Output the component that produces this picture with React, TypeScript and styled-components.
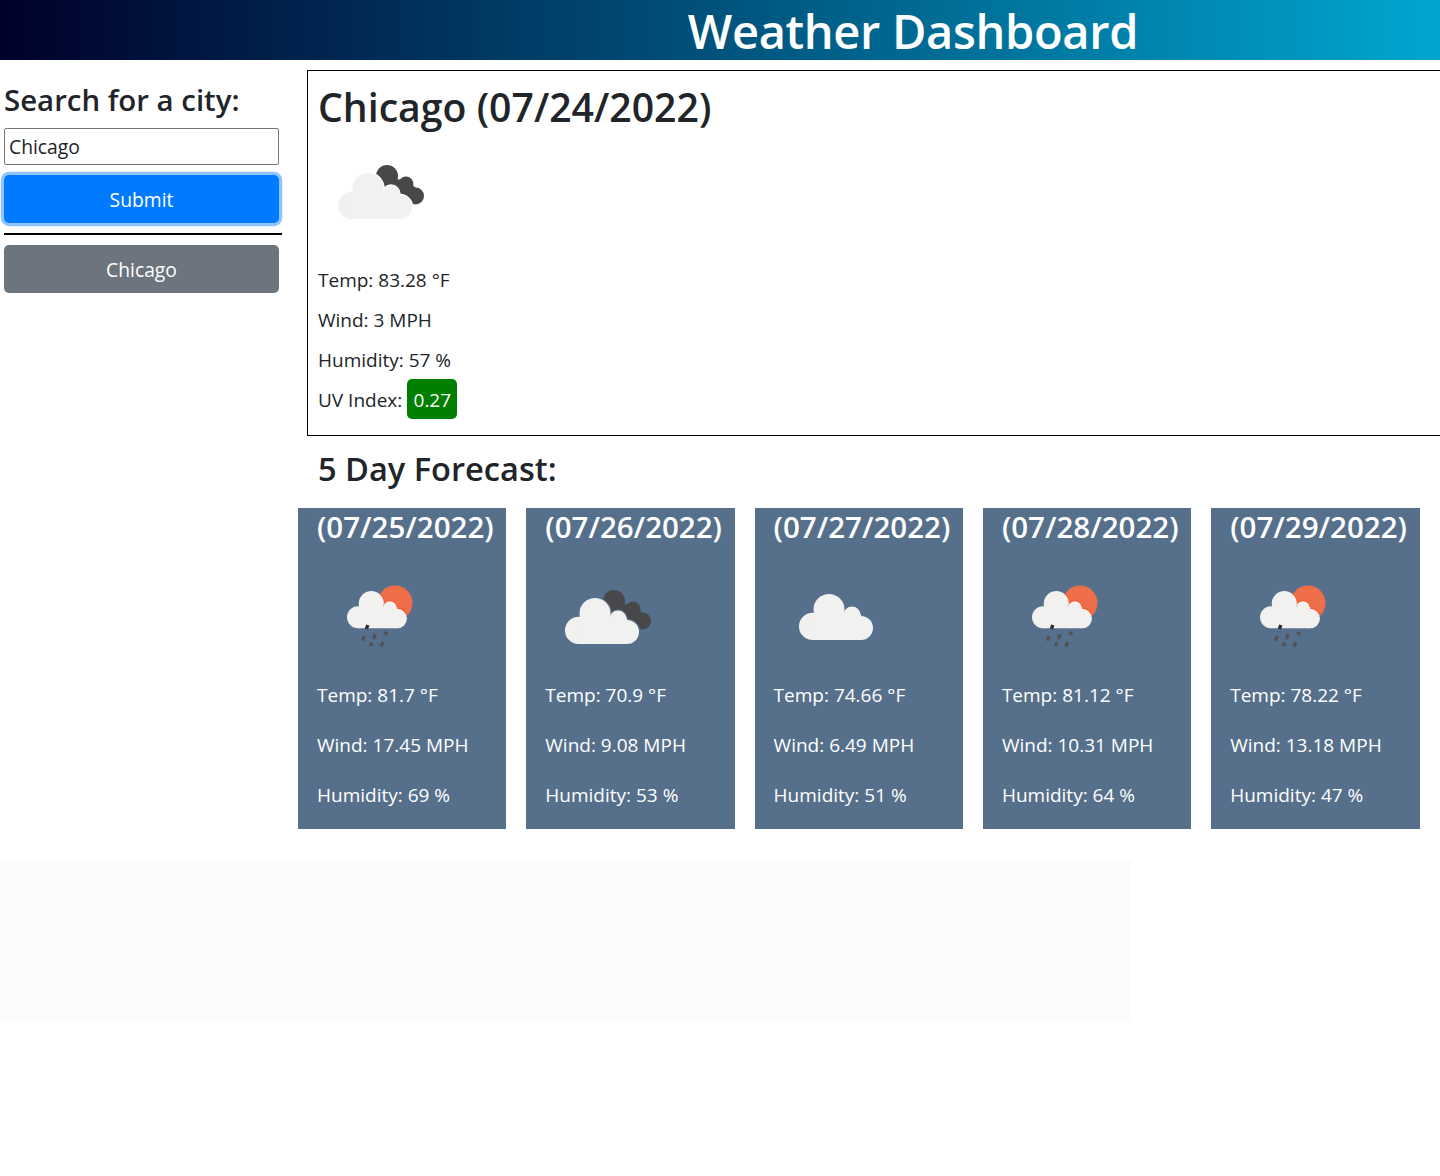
import { createGlobalStyle } from 'styled-components';
import styled from 'styled-components';

const GlobalStyle = createGlobalStyle`
    * {
        box-sizing: border-box;
    }
    html, body {
        margin: 0;
        background: #fff;
        overflow-x: hidden;
    }
    body {
        min-height: 1176px;
        font-family: "Open Sans", "Noto Sans", sans-serif;
        color: #212529;
    }
`

const Header = styled.header`
    height: 60px;
    display: flex;
    align-items: center;
    justify-content: center;
    padding: 3px 0 0 386px;
    background: linear-gradient(90deg, #00002a 0%, #00a6cf 100%);
`
const HeaderTitle = styled.h1`
    margin: 0;
    color: #fff;
    font-size: 47px;
    font-weight: 600;
    letter-spacing: -0.33px;
    line-height: 57px;
`
const Layout = styled.div`
    display: grid;
    grid-template-columns: 298px 1142px;
`
const Sidebar = styled.aside`
    padding: 21px 0 0 4px;
    display: flex;
    flex-direction: column;
    align-items: flex-start;
`
const SearchTitle = styled.h4`
    margin: 0 0 8px;
    font-size: 29.4px;
    font-weight: 600;
    line-height: 39px;
    white-space: nowrap;
`
const CityInput = styled.input`
    width: 275px;
    height: 37px;
    padding: 0 4px;
    border: 1px solid #767676;
    border-radius: 2px;
    font: 19.3px "Open Sans", sans-serif;
    color: #212529;
    background: #fff;
`
const Button = styled.button<{ $variant: 'primary' | 'secondary' }>`
    width: 275px;
    height: 48px;
    padding: 1px 0 0;
    border: 0;
    border-radius: 5px;
    color: #fff;
    font: 19.3px "Open Sans", sans-serif;
    background: ${p => (p.$variant === 'primary' ? '#007bff' : '#6c757d')};
    box-shadow: ${p => (p.$variant === 'primary' ? '0 0 0 3.2px #8fc4ff' : 'none')};
    margin-top: ${p => (p.$variant === 'primary' ? '10px' : '0')};
`
const Divider = styled.hr`
    width: 278px;
    height: 2px;
    margin: 10px 0;
    border: 0;
    background: #000;
`
const Main = styled.main`
    min-width: 0;
`
const CurrentBox = styled.section`
    width: 1140px;
    height: 366px;
    margin: 10px 0 0 9px;
    padding: 9px 10px 0;
    border: 1px solid #000;
`
const CityTitle = styled.h2`
    margin: 0;
    font-size: 39.2px;
    font-weight: 600;
    line-height: 54px;
    white-space: nowrap;
`
const BigIcon = styled.svg`
    display: block;
    width: 100px;
    height: 100px;
    margin: 11px 0 14px;
    overflow: visible;
`
const StatRow = styled.p`
    margin: 0;
    height: 40px;
    padding-top: 2px;
    display: flex;
    align-items: center;
    gap: 5px;
    font-size: 19px;
`
const UvBadge = styled.span`
    height: 40px;
    width: 50px;
    margin-top: -2px;
    padding-top: 2px;
    display: flex;
    align-items: center;
    justify-content: center;
    background: #008000;
    color: #fff;
    border-radius: 5px;
`
const ForecastTitle = styled.h3`
    margin: 14px 0 20px 20px;
    font-size: 32.6px;
    font-weight: 600;
    line-height: 38px;
`
const Cards = styled.div`
    width: 1121.5px;
    display: grid;
    grid-template-columns: repeat(5, minmax(0, 1fr));
    gap: 20px;
`
const Card = styled.article`
    height: 321px;
    padding: 0 19px;
    background: #56708b;
    color: #fff;
`
const CardDate = styled.h3`
    margin: 0;
    padding-top: 1px;
    height: 62px;
    font-size: 29.5px;
    font-weight: 600;
    line-height: 36px;
    white-space: nowrap;
`
const CardIcon = styled.svg`
    display: block;
    width: 100px;
    height: 100px;
    margin-bottom: 13px;
    overflow: visible;
`
const CardStat = styled.p`
    margin: 0 0 26px;
    font-size: 19px;
    line-height: 24px;
    white-space: nowrap;
`
const EmptyPanel = styled.div`
    width: 1131px;
    height: 161px;
    margin-top: 31px;
    background: #fafbfd;
`

type Kind = 'clouds' | 'broken' | 'rain';

// light cloud, drawn from circles over a base block, 74 x 46 units
function CloudShape({ x, y, scale, fill }: { x: number; y: number; scale: number; fill: string }) {
    return (
        <g transform={`translate(${x} ${y}) scale(${scale})`} fill={fill}>
            <circle cx="13.6" cy="32.4" r="13.6" />
            <circle cx="30" cy="15.5" r="15.5" />
            <circle cx="53" cy="21" r="8.5" />
            <circle cx="62" cy="34" r="12" />
            <rect x="13.6" y="20" width="48.4" height="26" />
        </g>
    );
}

// the thin line where a cloud overlaps what is behind it
function CloudGap({ x, y, scale, color }: { x: number; y: number; scale: number; color: string }) {
    return (
        <g transform={`translate(${x} ${y}) scale(${scale})`} fill={color} stroke={color} strokeWidth="2.4">
            <circle cx="30" cy="15.5" r="15.5" />
            <circle cx="53" cy="21" r="8.5" />
            <circle cx="62" cy="34" r="12" />
        </g>
    );
}

function WeatherIcon({ kind, gap }: { kind: Kind; gap: string }) {
    if (kind === 'clouds') {
        return <CloudShape x={25} y={24} scale={1} fill="#f1f1f0" />;
    }
    if (kind === 'broken') {
        return (
            <>
                <g fill="#48484a">
                    <circle cx="69" cy="31" r="11" />
                    <circle cx="88" cy="39" r="7.5" />
                    <circle cx="97.5" cy="51" r="8.5" />
                    <polygon points="66,33 88,35 103,47 96,59 80,62" />
                </g>
                <CloudGap x={20} y={28} scale={1} color={gap} />
                <CloudShape x={20} y={28} scale={1} fill="#f1f1f0" />
            </>
        );
    }
    return (
        <>
            <defs>
                <clipPath id="sun-disc">
                    <circle cx="78" cy="33" r="17.5" />
                </clipPath>
            </defs>
            <circle cx="78" cy="33" r="17.5" fill="#ee6e4a" />
            <g clipPath="url(#sun-disc)">
                <CloudGap x={30} y={21} scale={0.81} color="#f4562b" />
            </g>
            <CloudShape x={30} y={21} scale={0.81} fill="#f1f1f0" />
            <g stroke="#505257" strokeWidth="3.4">
                <path d="M50.8 55 L49.4 59" stroke="#2b2d30" />
                <path d="M47.2 66 L45.4 70.6" />
                <path d="M58.2 64.4 L56.4 69" />
                <path d="M69.4 61.6 L68 65" />
                <path d="M54.8 72.6 L53.4 76" />
                <path d="M65.8 72 L64 76.6" />
            </g>
        </>
    );
}

const forecast: { date: string; kind: Kind; temp: string; wind: string; humidity: string }[] = [
    { date: '(07/25/2022)', kind: 'rain', temp: '81.7', wind: '17.45', humidity: '69' },
    { date: '(07/26/2022)', kind: 'broken', temp: '70.9', wind: '9.08', humidity: '53' },
    { date: '(07/27/2022)', kind: 'clouds', temp: '74.66', wind: '6.49', humidity: '51' },
    { date: '(07/28/2022)', kind: 'rain', temp: '81.12', wind: '10.31', humidity: '64' },
    { date: '(07/29/2022)', kind: 'rain', temp: '78.22', wind: '13.18', humidity: '47' },
];

export default function App() {
    return (
        <>
            <GlobalStyle />
            <Header>
                <HeaderTitle>Weather Dashboard</HeaderTitle>
            </Header>
            <Layout>
                <Sidebar>
                    <SearchTitle>Search for a city:</SearchTitle>
                    <CityInput defaultValue="Chicago" />
                    <Button $variant="primary">Submit</Button>
                    <Divider />
                    <Button $variant="secondary">Chicago</Button>
                </Sidebar>
                <Main>
                    <CurrentBox>
                        <CityTitle>Chicago (07/24/2022)</CityTitle>
                        <BigIcon viewBox="0 0 100 100">
                            <WeatherIcon kind="broken" gap="#ffffff" />
                        </BigIcon>
                        <StatRow>Temp: 83.28 °F</StatRow>
                        <StatRow>Wind: 3 MPH</StatRow>
                        <StatRow>Humidity: 57 %</StatRow>
                        <StatRow>
                            UV Index: <UvBadge>0.27</UvBadge>
                        </StatRow>
                    </CurrentBox>
                    <ForecastTitle>5 Day Forecast:</ForecastTitle>
                    <Cards>
                        {forecast.map(day => (
                            <Card key={day.date}>
                                <CardDate>{day.date}</CardDate>
                                <CardIcon viewBox="0 0 100 100">
                                    <WeatherIcon kind={day.kind} gap="#56708b" />
                                </CardIcon>
                                <CardStat>Temp: {day.temp} °F</CardStat>
                                <CardStat>Wind: {day.wind} MPH</CardStat>
                                <CardStat>Humidity: {day.humidity} %</CardStat>
                            </Card>
                        ))}
                    </Cards>
                </Main>
            </Layout>
            <EmptyPanel />
        </>
    );
}
